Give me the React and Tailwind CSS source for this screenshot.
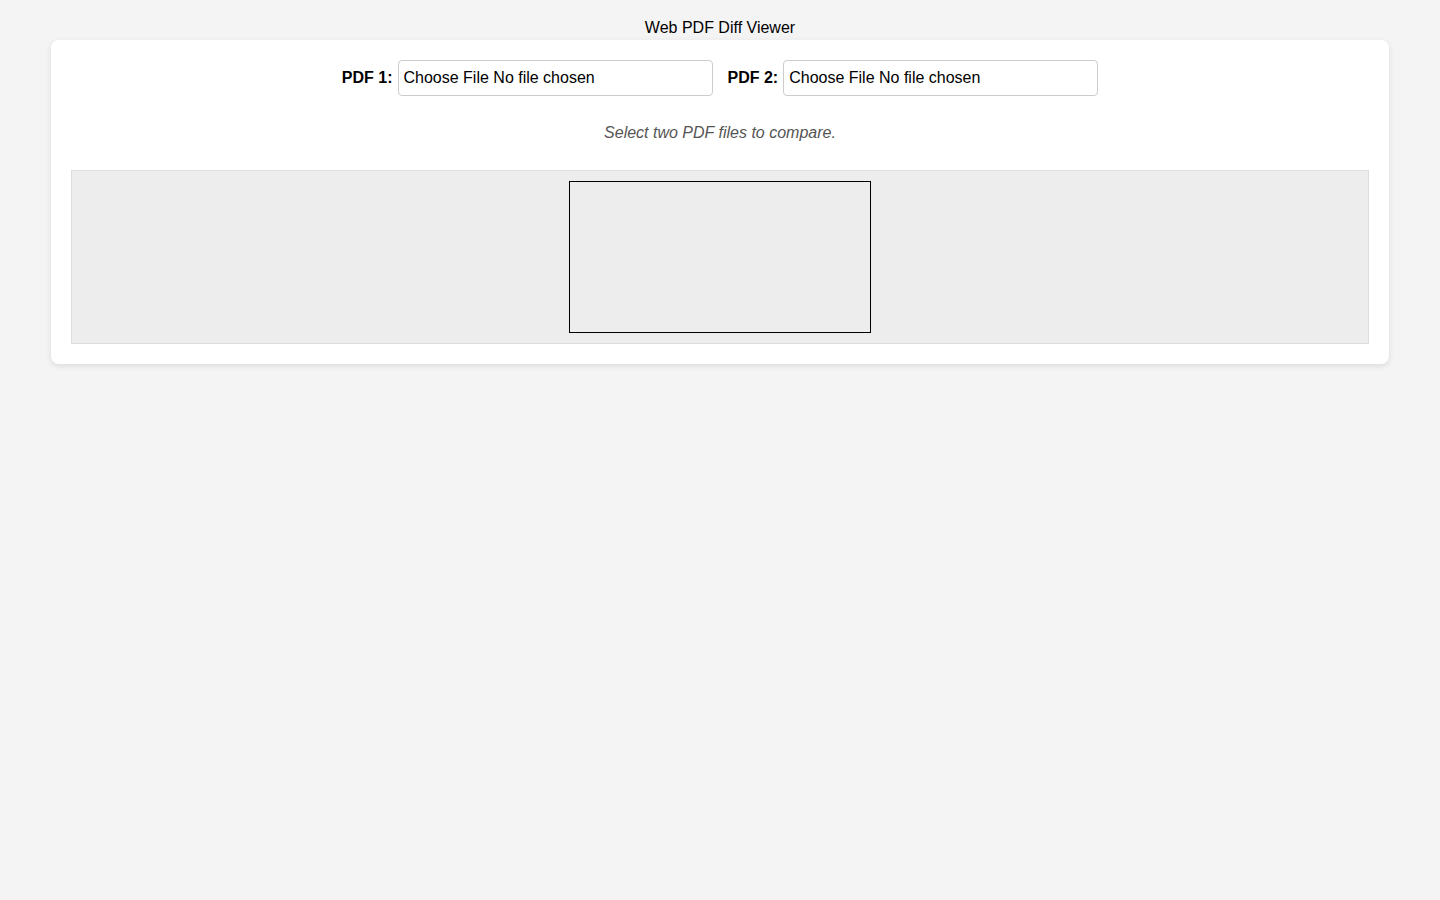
export default function App() {
  const FileField = ({ label }) => (
    <label className="flex items-center gap-[5px]">
      <span className="font-bold">{label}</span>
      <span className="flex h-[36px] w-[315px] items-center rounded-[4px] border border-[#cccccc] bg-white px-[5px]">
        Choose File No file chosen
      </span>
      <input type="file" accept="application/pdf" className="hidden" />
    </label>
  );

  return (
    <div
      className="min-h-screen bg-[#f4f4f4] text-[16px] text-black"
      style={{ fontFamily: '"Liberation Sans", Arial, sans-serif' }}
    >
      <h1 className="pt-[19px] text-center text-[16px] font-normal leading-[18px]">Web PDF Diff Viewer</h1>
      <div className="mx-[51px] mt-[3px] rounded-[8px] bg-white p-[20px] shadow-[0_2px_6px_rgba(0,0,0,0.1)]">
        <div className="flex items-center justify-center gap-[15px]">
          <FileField label="PDF 1:" />
          <FileField label="PDF 2:" />
        </div>
        <p className="mt-[28px] text-center italic leading-[18px] text-[#555555]">Select two PDF files to compare.</p>
        <div className="mt-[28px] flex justify-center border border-[#dddddd] bg-[#ededed] p-[10px]">
          <div className="h-[152px] w-[302px] border border-black" />
        </div>
      </div>
    </div>
  );
}
